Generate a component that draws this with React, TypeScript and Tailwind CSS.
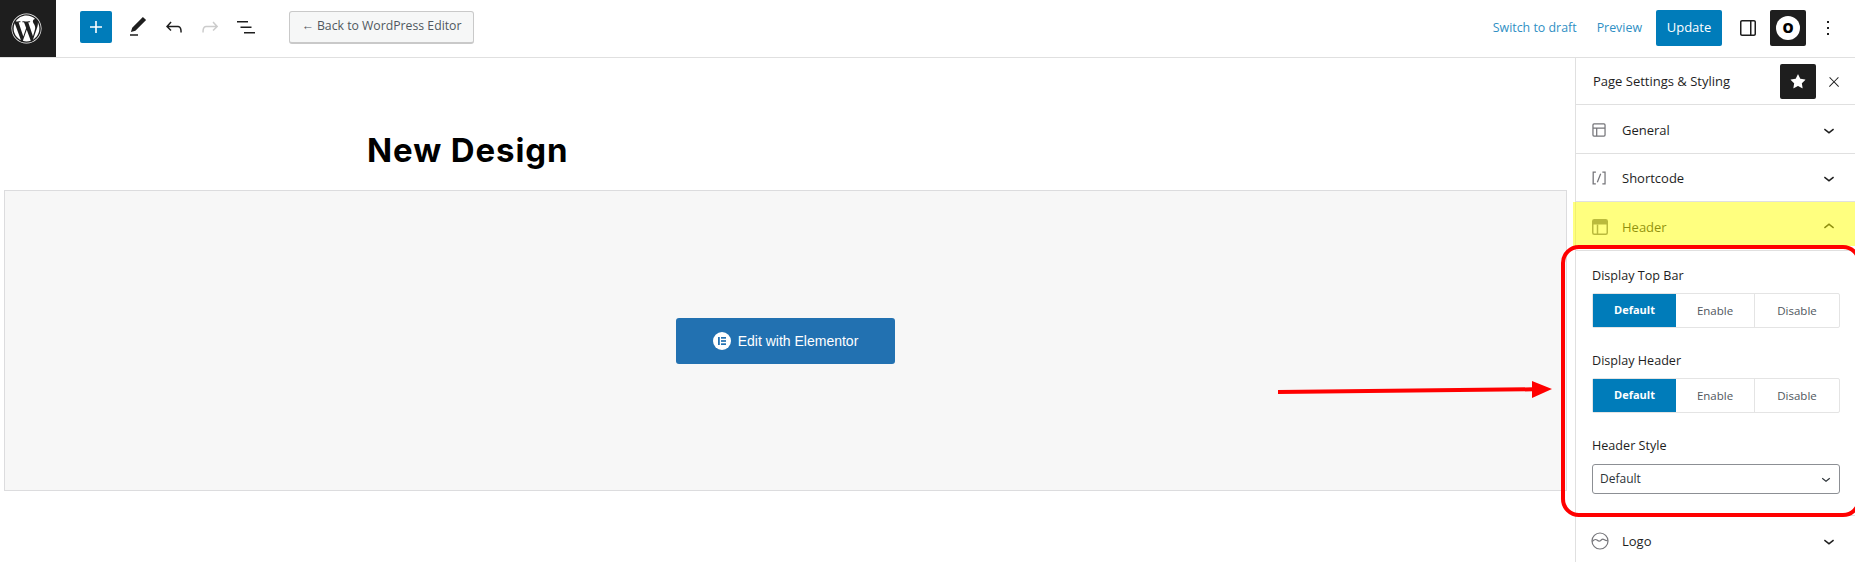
import React from 'react';
import { FaWordpress } from 'react-icons/fa';

const PATHS = {
  plus: 'M18 11.2h-5.2V6h-1.6v5.2H6v1.6h5.2V18h1.6v-5.2H18z',
  pencil: 'M20.1 5.1L16.9 2 6.2 12.7l-1.3 4.4 4.5-1.3L20.1 5.1zM4 20.8h8v-1.5H4v1.5z',
  undo: 'M18.3 11.7c-.6-.6-1.4-.9-2.3-.9H6.7l2.9-3.3-1.1-1-4.5 5L8.5 16l1-1-2.7-2.7H16c.5 0 .9.2 1.3.5 1 1 1 3.4 1 4.5v.3h1.5v-.2c0-1.5 0-4.3-1.5-5.7z',
  redo: 'M15.6 6.5l-1.1 1 2.9 3.3H8c-.9 0-1.7.3-2.3.9-1.4 1.5-1.4 4.2-1.4 5.6v.2h1.5v-.3c0-1.1 0-3.5 1-4.5.3-.3.7-.5 1.3-.5h9.2L14.5 15l1.1 1.1 4.6-4.6-4.6-5z',
  list: 'M3 6h11v1.5H3V6Zm3.5 5.5h11V13h-11v-1.5ZM21 17H10v1.5h11V17Z',
  drawer: 'M18 4H6c-1.1 0-2 .9-2 2v12c0 1.1.9 2 2 2h12c1.1 0 2-.9 2-2V6c0-1.1-.9-2-2-2zm-4 14.5H6c-.3 0-.5-.2-.5-.5V6c0-.3.2-.5.5-.5h8v13zm4.5-.5c0 .3-.2.5-.5.5h-2.5v-13H18c.3 0 .5.2.5.5v12z',
  more: 'M13 19h-2v-2h2v2zm0-6h-2v-2h2v2zm0-6h-2V5h2v2z',
  star: 'M11.776 4.454a.25.25 0 01.448 0l2.069 4.192a.25.25 0 00.188.137l4.626.672a.25.25 0 01.139.426l-3.348 3.263a.25.25 0 00-.072.222l.79 4.607a.25.25 0 01-.362.263l-4.138-2.175a.25.25 0 00-.232 0l-4.138 2.175a.25.25 0 01-.363-.263l.79-4.607a.25.25 0 00-.071-.222L4.754 9.881a.25.25 0 01.139-.426l4.626-.672a.25.25 0 00.188-.137l2.069-4.192z',
  close: 'M13 11.8l6.1-6.3-1-1-6.1 6.2-6.1-6.2-1 1 6.1 6.3-6.5 6.7 1 1 6.5-6.6 6.5 6.6 1-1z',
  down: 'M17.5 11.6L12 16l-5.5-4.4.9-1.2L12 14l4.5-3.6 1 1.2z',
  up: 'M6.5 12.4L12 8l5.5 4.4-.9 1.2L12 10l-4.5 3.6-1-1.2z',
  layout: 'M18 5.5H6a.5.5 0 00-.5.5v3h13V6a.5.5 0 00-.5-.5zm.5 5H10v8h8a.5.5 0 00.5-.5v-7.5zm-10 0h-3V18a.5.5 0 00.5.5h2.5v-8zM6 4h12a2 2 0 012 2v12a2 2 0 01-2 2H6a2 2 0 01-2-2V6a2 2 0 012-2z',
  shortcode: 'M16 4.2v1.5h2.5v12.5H16v1.5h4V4.2h-4zM4.2 19.8h4v-1.5H5.8V5.8h2.5V4.2h-4l-.1 15.6zm5.1-3.1l1.4.6 4-10-1.4-.6-4 10z',
};

function Icon({ d, size = 24, className = '' }: { d: string; size?: number; className?: string }) {
  return (
    <svg width={size} height={size} viewBox="0 0 24 24" fill="currentColor" className={className}>
      <path d={d} />
    </svg>
  );
}

function HeaderLayoutIcon() {
  return (
    <svg width="16" height="16" viewBox="0 0 16 16" fill="none" className="-ml-[1px] text-[#75757a]">
      <rect x="0.75" y="0.75" width="14.5" height="14.5" rx="1.5" stroke="currentColor" strokeWidth="1.5" />
      <path d="M1 1h14v4.5H1z" fill="currentColor" />
      <path d="M5.5 5.5V15" stroke="currentColor" strokeWidth="1.5" />
    </svg>
  );
}

function LogoIcon() {
  return (
    <svg width="18" height="18" viewBox="0 0 18 18" fill="none" stroke="#75757a" strokeWidth="1.2" className="-ml-[2px]">
      <circle cx="9" cy="9" r="8" />
      <path d="M1.2 9.5C3 7.5 4.6 7 6 8c1.5 1.2 2.2 1.6 3.4.7 1.4-1.200 2.200-2 3.300-1.300 1.100.7 2.400 1.600 4.100 1.300" />
    </svg>
  );
}

function PanelRow({ icon, label, open = false, height = 'h-[49px]' }: { icon: React.ReactNode; label: string; open?: boolean; height?: string }) {
  return (
    <div className={`${height} flex items-center pl-[17px] pr-[15px] pt-[1px] border-b border-[#e0e0e0] text-[13px] font-medium text-[#1e1e1e]`}>
      <span className="w-[29px] flex items-center">{icon}</span>
      <span className="flex-1 mt-[2px]">{label}</span>
      <Icon d={open ? PATHS.up : PATHS.down} size={22} />
    </div>
  );
}

function Segmented() {
  return (
    <div className="flex h-[35px] border border-[#e4e4e4] rounded-[2px] text-[11.5px] font-medium text-[#50575e]">
      <div className="w-[83px] bg-[#007cba] text-white text-[11px] font-bold flex items-center justify-center">Default</div>
      <div className="w-[79px] border-r border-[#e4e4e4] flex items-center justify-center">Enable</div>
      <div className="flex-1 flex items-center justify-center">Disable</div>
    </div>
  );
}

export default function App() {
  return (
    <div className="relative w-[1855px] h-[562px] overflow-hidden bg-white font-['Open_Sans',sans-serif] text-[#1e1e1e]">
      <header className="h-[58px] flex items-center border-b border-[#e0e0e0]">
        <div className="w-[56px] h-[57px] bg-[#1e1e1e] flex items-center justify-center pr-1 text-white shrink-0">
          <FaWordpress size={31} />
        </div>
        <div className="flex items-center ml-6 -mt-[3px]">
          <div className="w-8 h-8 rounded-[2px] bg-[#007cba] text-white flex items-center justify-center">
            <Icon d={PATHS.plus} size={24} />
          </div>
          <div className="flex items-center gap-3 ml-[14px]">
            <Icon d={PATHS.pencil} />
            <Icon d={PATHS.undo} />
            <Icon d={PATHS.redo} className="text-[#cccccc]" />
            <Icon d={PATHS.list} />
          </div>
          <button className="ml-[31px] h-[33px] w-[185px] rounded-[3px] border border-[#c9c9c9] border-b-2 bg-[#f6f7f7] text-[12.25px] text-[#50575e] flex items-center justify-center">
            ← Back to WordPress Editor
          </button>
        </div>
        <div className="ml-auto flex items-center text-[12.4px] text-[#2f8fc4] -mt-[1px]">
          <span className="mr-5">Switch to draft</span>
          <span className="mr-[14px]">Preview</span>
          <div className="w-[66px] h-9 rounded-[2px] bg-[#007cba] text-white text-[13px] font-medium flex items-center justify-center">Update</div>
          <Icon d={PATHS.drawer} className="ml-[14px] text-[#1e1e1e]" />
          <div className="ml-[10px] w-9 h-9 rounded-[2px] bg-[#1e1e1e] flex items-center justify-center">
            <div className="w-6 h-6 rounded-full bg-white text-black flex items-center justify-center text-sm font-extrabold">O</div>
          </div>
          <Icon d={PATHS.more} className="ml-[10px] mr-[15px] text-[#1e1e1e]" />
        </div>
      </header>

      <div className="flex h-[504px]">
        <main className="flex-1 min-w-0 pl-1 pr-2">
          <h1 className="h-[132px] pl-[363px] pt-[72px] font-['Inter',sans-serif] text-[33px] leading-[40px] font-bold text-black tracking-[0.9px]">
            New Design
          </h1>
          <div className="h-[301px] border border-[#dcdcde] bg-[#f7f7f7] flex items-center justify-center">
            <button className="mt-[1px] w-[219px] h-[46px] rounded-[3px] bg-[#2271b1] text-white font-['Liberation_Sans',sans-serif] text-sm flex items-center justify-center gap-[7px]">
              <span className="w-[18px] h-[18px] rounded-full bg-white flex items-center justify-center">
                <svg width="10" height="10" viewBox="0 0 10 10" fill="#2271b1">
                  <rect x="1" y="1" width="1.800" height="8" />
                  <rect x="4" y="1" width="5" height="1.700" />
                  <rect x="4" y="4.150" width="5" height="1.700" />
                  <rect x="4" y="7.300" width="5" height="1.700" />
                </svg>
              </span>
              Edit with Elementor
            </button>
          </div>
        </main>

        <aside className="w-[280px] shrink-0 border-l border-[#e0e0e0]">
          <div className="h-[47px] flex items-center pl-[17px] pt-[1px] border-b border-[#e0e0e0] text-[13px] font-medium">
            <span className="flex-1">Page Settings &amp; Styling</span>
            <div className="w-9 h-[35px] rounded-[2px] bg-[#1e1e1e] text-white flex items-center justify-center">
              <Icon d={PATHS.star} />
            </div>
            <Icon d={PATHS.close} size={16} className="ml-[10px] mr-[13px]" />
          </div>
          <PanelRow label="General" icon={<Icon d={PATHS.layout} size={20} className="-ml-[4px] text-[#75757a]" />} />
          <PanelRow label="Shortcode" height="h-[48px]" icon={<Icon d={PATHS.shortcode} size={20} className="-ml-[4px] text-[#75757a]" />} />
          <PanelRow label="Header" open icon={<HeaderLayoutIcon />} />

          <div className="pl-[16px] pr-[15px] pt-[17px] h-[266px] border-b border-[#e0e0e0] -mt-[1px]">
            <div className="text-[12.6px] leading-[18px] font-medium mb-[8px]">Display Top Bar</div>
            <Segmented />
            <div className="text-[12.6px] leading-[18px] font-medium mt-[24px] mb-[8px]">Display Header</div>
            <Segmented />
            <div className="text-[12.6px] leading-[18px] font-medium mt-[24px] mb-[9px]">Header Style</div>
            <div className="h-[30px] border border-[#8c8f94] rounded-[3px] flex items-center pl-[7px] pr-[4px] text-xs text-[#2c3338]">
              <span className="flex-1">Default</span>
              <Icon d={PATHS.down} size={18} />
            </div>
          </div>
          <PanelRow label="Logo" icon={<LogoIcon />} />
        </aside>
      </div>

      <div className="absolute left-[1573px] top-[202px] w-[282px] h-[44px] bg-[#ffff00]/50" />
      <div className="absolute left-[1561px] top-[245px] w-[300px] h-[272px] border-[4px] border-[#ff0000] rounded-[18px]" />
      <svg className="absolute left-[1270px] top-[375px]" width="290" height="30" viewBox="0 0 290 30">
        <path d="M8 17 L263 14.300" stroke="#ff0000" strokeWidth="4" fill="none" />
        <path d="M262 6 L282 14 L262 23 Z" fill="#ff0000" />
      </svg>
    </div>
  );
}
